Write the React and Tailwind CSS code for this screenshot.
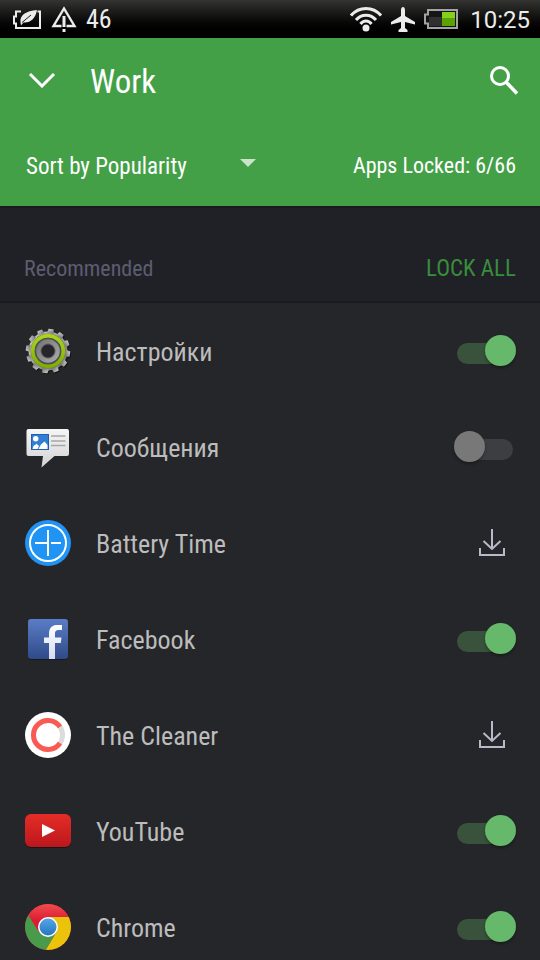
import { useState } from "react";

const initialApps = [
  { id: "settings", name: "Настройки", lang: "ru", icon: SettingsIcon, locked: true },
  { id: "messages", name: "Сообщения", lang: "ru", icon: MessagesIcon, locked: false },
  { id: "battery", name: "Battery Time", icon: BatteryTimeIcon, download: true },
  { id: "facebook", name: "Facebook", icon: FacebookIcon, locked: true },
  { id: "cleaner", name: "The Cleaner", icon: CleanerIcon, download: true },
  { id: "youtube", name: "YouTube", icon: YouTubeIcon, locked: true },
  { id: "chrome", name: "Chrome", icon: ChromeIcon, locked: true },
];

const teeth = [0, 30, 60, 90, 120, 150, 180, 210, 240, 270, 300, 330];

function SettingsIcon() {
  return (
    <svg viewBox="0 0 48 48" className="size-12" aria-hidden="true">
      <defs>
        <linearGradient id="gear" x1="0" y1="0" x2="1" y2="1">
          <stop offset="0" stopColor="#d6d6d6" />
          <stop offset="1" stopColor="#6a6a6a" />
        </linearGradient>
        <linearGradient id="gearRing" x1="0" y1="0" x2="0" y2="1">
          <stop offset="0" stopColor="#a9d61a" />
          <stop offset="1" stopColor="#7fae04" />
        </linearGradient>
        <linearGradient id="gearHub" x1="0" y1="0" x2="1" y2="1">
          <stop offset="0" stopColor="#777" />
          <stop offset="1" stopColor="#a8a8a8" />
        </linearGradient>
        <mask id="gearHole">
          <rect width="48" height="48" fill="#fff" />
          <circle cx="24" cy="24" r="6.5" fill="#000" />
        </mask>
        <g id="gearShape">
          <circle cx="24" cy="24" r="19.5" />
          {teeth.map((angle) => (
            <path key={angle} d="M20.500 6 L21.500 1.800 H26.500 L27.500 6 Z" transform={`rotate(${angle + 8} 24 24)`} />
          ))}
        </g>
      </defs>
      <g mask="url(#gearHole)">
        <use href="#gearShape" x="1" y="1" fill="#121315" />
        <use href="#gearShape" fill="url(#gear)" />
        <circle cx="24" cy="24" r="17.5" fill="#6b7a3c" />
        <circle cx="24" cy="24" r="15.2" fill="none" stroke="url(#gearRing)" strokeWidth="3.8" />
        <circle cx="24" cy="24" r="13.3" fill="#505050" />
        <circle cx="24" cy="24" r="9.3" fill="none" stroke="url(#gearHub)" strokeWidth="5" />
        <circle cx="24" cy="24" r="7" fill="none" stroke="#5a5a5a" />
      </g>
    </svg>
  );
}

function MessagesIcon() {
  return (
    <svg viewBox="0 0 48 48" className="size-12" aria-hidden="true">
      <defs>
        <linearGradient id="bubble" x1="0" y1="0" x2="0" y2="1">
          <stop offset="0" stopColor="#f6f6f6" />
          <stop offset="1" stopColor="#d2d2d2" />
        </linearGradient>
      </defs>
      <path
        d="M4 6 H43 Q45 6 45 8 V31 Q45 33 43 33 H30.500 L17.500 44.500 L19 33 H4.500 Q2.500 33 2.500 31 V8 Q2.500 6 4.500 6 Z"
        fill="url(#bubble)"
      />
      <rect x="7" y="11" width="18" height="16" fill="#1f5fb4" />
      <rect x="8" y="12" width="16" height="14" fill="#3180cf" />
      <circle cx="11.700" cy="15.800" r="2.700" fill="#fff" />
      <path d="M8.500 26 L9.500 23 L12.500 20.800 L15 23 L13.500 26 Z" fill="#fff" />
      <path d="M14.500 26 L17 21.500 L20.500 18.500 L23.500 22 V26 Z" fill="#fff" />
      <path d="M27 13 H41.500 M27 18 H41.500 M27 22.500 H41.500" stroke="#a7a7a7" strokeWidth="1.500" />
    </svg>
  );
}

function BatteryTimeIcon() {
  return (
    <svg viewBox="0 0 48 48" className="size-12" aria-hidden="true">
      <circle cx="24" cy="24" r="23" fill="#2094f5" />
      <circle cx="24" cy="24" r="18" fill="none" stroke="#fff" strokeWidth="2" />
      <path d="M24 11 V37 M11 24 H23 M27 24 H37" stroke="#fff" strokeWidth="2" />
    </svg>
  );
}

function FacebookIcon() {
  return (
    <svg viewBox="0 0 48 48" className="size-12" aria-hidden="true">
      <defs>
        <linearGradient id="fbBg" x1="0" y1="0" x2="0" y2="1">
          <stop offset="0" stopColor="#5b7dc7" />
          <stop offset="1" stopColor="#2f4a88" />
        </linearGradient>
        <linearGradient id="fbMark" x1="0" y1="0" x2="0" y2="1">
          <stop offset="0" stopColor="#fff" />
          <stop offset="1" stopColor="#d5dcef" />
        </linearGradient>
      </defs>
      <rect x="4" y="5" width="40" height="40" rx="3" fill="#17181b" />
      <rect x="4" y="4" width="40" height="40" rx="3" fill="url(#fbBg)" />
      <path
        d="M25 44 V28 H20 V22.500 H25 V19 C25 12.500 28.500 10 33 10 H38 V15 H35 C32 15 31 16 31 19 V22.500 H37.500 L36.800 28 H31 V44 Z"
        fill="url(#fbMark)"
      />
    </svg>
  );
}

function CleanerIcon() {
  return (
    <svg viewBox="0 0 48 48" className="size-12" aria-hidden="true">
      <circle cx="24" cy="24" r="23" fill="#fff" />
      <circle cx="24" cy="24" r="14.500" fill="none" stroke="#dcdcdc" strokeWidth="5" />
      <path d="M36 15.900 A14.500 14.500 0 1 0 36 32.100" fill="none" stroke="#fb5a52" strokeWidth="5" />
    </svg>
  );
}

function YouTubeIcon() {
  return (
    <svg viewBox="0 0 48 48" className="size-12" aria-hidden="true">
      <defs>
        <linearGradient id="ytBg" x1="0" y1="0" x2="0" y2="1">
          <stop offset="0" stopColor="#e52d27" />
          <stop offset="1" stopColor="#bb171d" />
        </linearGradient>
      </defs>
      <rect x="1" y="8" width="46" height="33" rx="6" fill="#16171a" />
      <rect x="1" y="7" width="46" height="33" rx="6" fill="url(#ytBg)" />
      <path d="M18 17 L31 23.500 L18 30 Z" fill="#fff" />
    </svg>
  );
}

function ChromeIcon() {
  return (
    <svg viewBox="0 0 48 48" className="size-12" aria-hidden="true">
      <defs>
        <clipPath id="chromeClip">
          <circle cx="24" cy="24" r="23" />
        </clipPath>
        <linearGradient id="chromeRed" x1="0" y1="0" x2="0" y2="1">
          <stop offset="0" stopColor="#f0504f" />
          <stop offset="0.600" stopColor="#dc1c33" />
        </linearGradient>
        <linearGradient id="chromeBlue" x1="0" y1="0" x2="0" y2="1">
          <stop offset="0" stopColor="#55a5e4" />
          <stop offset="1" stopColor="#2676c4" />
        </linearGradient>
      </defs>
      <g clipPath="url(#chromeClip)">
        <rect width="48" height="48" fill="#dd1f35" />
        <path d="M24 14 H48 V48 H21 L33 28 Z" fill="#ecc30b" />
        <path d="M0 6 L4.500 12 L15 29 L24 34 L32.500 29 L21 48 H0 Z" fill="#4a9a4b" />
        <path d="M0 0 H48 V14 H24 L15 29 L3 10 Z" fill="url(#chromeRed)" />
      </g>
      <circle cx="24" cy="24" r="10" fill="#fff" />
      <circle cx="24" cy="24" r="8.500" fill="url(#chromeBlue)" />
    </svg>
  );
}

const StatusBar = () => (
  <div className="flex h-[38px] shrink-0 items-center justify-between bg-linear-to-b from-[#343432] to-black pr-[10px] pl-3 text-[#ececec]">
    <div className="flex items-center gap-[9px]">
      <svg viewBox="0 0 30 24" className="h-6 w-[30px]" aria-label="Power saver" role="img">
        <path
          d="M9 4.500 H4 V9.500 H2 V16.500 H4 V21 H28 V4.500 H25.500"
          fill="none"
          stroke="currentColor"
          strokeWidth="2"
        />
        <path d="M8.500 15.500 C7.500 8 14 4 25 3 C23.500 11 19 16 11.500 15.500 L9 18.500 Z" fill="currentColor" />
        <path d="M10 15.500 L19 8" stroke="#1c1c1b" strokeWidth="1" />
      </svg>
      <svg viewBox="0 0 26 26" className="size-[26px]" aria-label="Warning" role="img">
        <path d="M10.500 20 H2.500 L13 2.500 L23.500 20 H15.500" fill="none" stroke="currentColor" strokeWidth="2.400" />
        <path d="M13 10 V21 M13 23 V26" stroke="currentColor" strokeWidth="3" />
      </svg>
      <span className="text-[26px] leading-8">46</span>
    </div>
    <div className="flex items-center">
      <svg viewBox="0 0 32 26" className="h-[26px] w-8" fill="none" stroke="currentColor" strokeWidth="3" aria-label="Wi-Fi" role="img">
        <path d="M1 9.500 C9 0 23 0 31 9.500" />
        <path d="M6 14 C11.500 7.500 20.500 7.500 26 14" />
        <path d="M10.500 18 C13.500 14 18.500 14 21.500 18" />
        <circle cx="16" cy="22" r="3.500" fill="currentColor" stroke="none" />
      </svg>
      <svg viewBox="0 0 24 25" className="ml-[9px] h-[25px] w-6" fill="currentColor" aria-label="Airplane mode" role="img">
        <path d="M12 0 C13.400 0 14 1.500 14 3 V9 L24 15 V17.500 L14 15 V21 L16.500 23 V25 H7.500 V23 L10 21 V15 L0 17.500 V15 L10 9 V3 C10 1.500 10.600 0 12 0 Z" />
      </svg>
      <svg viewBox="0 0 34 20" className="ml-[9px] h-5 w-[34px]" aria-label="Battery" role="img">
        <path d="M4 1 H33 V19 H4 V14.500 H1 V5.500 H4 Z" fill="#151515" stroke="#a3a3a3" strokeWidth="2" />
        <rect x="5" y="8" width="13" height="9" fill="#303030" />
        <rect x="18" y="3" width="13" height="14" fill="#5ba300" />
        <rect x="18" y="3" width="13" height="6" fill="#86cf1c" />
      </svg>
      <time className="ml-3 pt-0.5 font-['Roboto',sans-serif] text-[24px] leading-8">10:25</time>
    </div>
  </div>
);

const Toggle = ({ id, checked, onChange }) => (
  <span className="relative block h-8 w-[62px]">
    <input
      id={id}
      type="checkbox"
      checked={checked}
      onChange={onChange}
      className="peer absolute inset-0 size-full cursor-pointer appearance-none"
    />
    <span className="pointer-events-none absolute top-2 right-[3px] left-[3px] h-[21px] rounded-full bg-[#3d3e42] peer-checked:bg-[#38523c]" />
    <span className="pointer-events-none absolute top-0 left-0 size-[31px] rounded-full bg-[#787878] shadow-[0_2px_3px_rgba(0,0,0,0.3)] peer-checked:right-0 peer-checked:left-auto peer-checked:bg-[#66b86a]" />
  </span>
);

const DownloadButton = ({ name }) => (
  <button type="button" aria-label={`Download ${name}`} className="mr-[11px] cursor-pointer text-[#b9b9c9]">
    <svg viewBox="0 0 26 28" className="h-7 w-[26px]" fill="none" stroke="currentColor" strokeWidth="2" aria-hidden="true">
      <path d="M13 0 V19 M4.500 12 L13 20 L21.500 12" />
      <path d="M1 19 V26 H25 V19" />
    </svg>
  </button>
);

export default function App() {
  const [apps, setApps] = useState(initialApps);
  const [sort, setSort] = useState("popularity");

  const toggleApp = (id) => {
    setApps(apps.map((app) => (app.id === id ? { ...app, locked: !app.locked } : app)));
  };

  const lockAll = () => {
    setApps(apps.map((app) => (app.download ? app : { ...app, locked: true })));
  };

  // two more locked apps sit in the rest of the list
  const lockedCount = apps.filter((app) => app.locked).length + 2;

  return (
    <div className="flex h-screen flex-col overflow-hidden bg-[#252629] font-['Roboto_Condensed','Liberation_Sans_Narrow',sans-serif]">
      <StatusBar />

      <header className="shrink-0 bg-[#43a047] text-white">
        <div className="flex h-[84px] items-center pr-[21px] pl-7">
          <button type="button" aria-label="Back" className="cursor-pointer">
            <svg viewBox="0 0 28 16" className="h-4 w-7" fill="none" stroke="currentColor" strokeWidth="3" aria-hidden="true">
              <path d="M2 2 L14 14 L26 2" />
            </svg>
          </button>
          <h1 className="ml-[34px] flex-1 pt-1 text-[33px] leading-10">Work</h1>
          <button type="button" aria-label="Search" className="cursor-pointer">
            <svg viewBox="0 0 30 30" className="size-[30px]" fill="none" stroke="currentColor" aria-hidden="true">
              <circle cx="11" cy="11" r="8.500" strokeWidth="3" />
              <path d="M17 17 L28 28.500" strokeWidth="3.500" />
            </svg>
          </button>
        </div>
        <div className="flex h-[84px] items-center justify-between pt-1 pr-6 pl-[26px] leading-8">
          <div className="relative">
            <select
              aria-label="Sort apps"
              value={sort}
              onChange={(e) => setSort(e.target.value)}
              className="w-[230px] cursor-pointer appearance-none bg-transparent pt-1 text-[23px] outline-none"
            >
              <option value="popularity">Sort by Popularity</option>
              <option value="name">Sort by Name</option>
            </select>
            <svg viewBox="0 0 16 8" className="pointer-events-none absolute top-3 right-0 h-2 w-4 text-[#c9e4ca]" aria-hidden="true">
              <path d="M0 0 H16 L8 8 Z" fill="currentColor" />
            </svg>
          </div>
          <p className="text-[22px]">Apps Locked: {lockedCount}/66</p>
        </div>
      </header>

      <div className="flex h-[97px] shrink-0 items-center justify-between border-y-2 border-[#1a1b1e] bg-[#202126] px-6 pt-7 leading-8">
        <h2 className="text-[22px] text-[#5c5d70]">Recommended</h2>
        <button type="button" onClick={lockAll} className="cursor-pointer text-[23px] text-[#388e3c]">
          LOCK ALL
        </button>
      </div>

      <ul className="min-h-0 flex-1 overflow-y-auto [scrollbar-width:none]">
        {apps.map((app) => (
          <li key={app.id} className="flex h-24 items-center px-6">
            <app.icon />
            {app.download ? (
              <span className="ml-6 flex-1 pt-0.5 text-[26px] leading-8 text-[#bcbcbc]">{app.name}</span>
            ) : (
              <label htmlFor={app.id} lang={app.lang} className="ml-6 flex-1 cursor-pointer pt-0.5 text-[26px] leading-8 text-[#bcbcbc]">
                {app.name}
              </label>
            )}
            {app.download ? (
              <DownloadButton name={app.name} />
            ) : (
              <Toggle id={app.id} checked={app.locked} onChange={() => toggleApp(app.id)} />
            )}
          </li>
        ))}
      </ul>
    </div>
  );
}
